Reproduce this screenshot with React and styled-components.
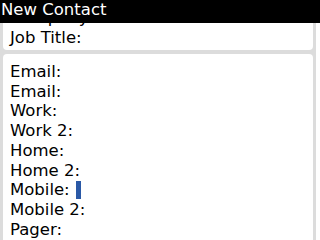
import React from 'react';
import styled, { createGlobalStyle } from 'styled-components';

const GlobalStyle = createGlobalStyle`
html, body {
    margin:0;
    padding:0;
    background:#ffffff;
}
body {
    font-family:"DejaVu Sans", "Liberation Sans", sans-serif;
    overflow:hidden;
}
`

const contactCard = ['Company:', 'Job Title:'];
const contactFields = ['Email:', 'Email:', 'Work:', 'Work 2:', 'Home:', 'Home 2:', 'Mobile:', 'Mobile 2:', 'Pager:', 'Fax:'];

export default function App() {
    return (
        <React.Fragment>
            <GlobalStyle />
            <Screen>
                <TitleBar>New Contact</TitleBar>
                <Viewport>
                    <Scroller>
                        <Card>
                            {contactCard.map((label, i) => (
                                <Field key={i}>{label}</Field>
                            ))}
                        </Card>
                        <Card $top>
                            {contactFields.map((label, i) => (
                                <Field key={i}>
                                    {label}
                                    {label === 'Mobile:' && <Cursor />}
                                </Field>
                            ))}
                        </Card>
                    </Scroller>
                </Viewport>
            </Screen>
        </React.Fragment>
    )
}

const Screen = styled.div `
width:320px;
height:240px;
display:flex;
flex-direction:column;
overflow:hidden;
background:#ffffff;
`
const TitleBar = styled.div `
height:23px;
flex:none;
background:#000000;
color:#ffffff;
font-size:16.5px;
line-height:19px;
padding-left:1px;
position:relative;
z-index:1;
`
const Viewport = styled.div `
flex:1;
overflow:hidden;
`
const Scroller = styled.div `
margin-top:-24px;
width:316px;
padding:3px 3px 0 3px;
box-sizing:border-box;
background:#dcdcdc;
display:flex;
flex-direction:column;
gap:4px;
`
const Card = styled.div `
background:#ffffff;
border-radius:4px;
padding:${props => props.$top ? '8px' : '6px'} 0 2px 7px;
`
const Field = styled.div `
display:flex;
align-items:center;
height:19.75px;
font-size:16.5px;
color:#000000;
white-space:nowrap;
`
const Cursor = styled.span `
display:inline-block;
width:5px;
height:18px;
margin-left:6px;
background:#2a59a6;
`
